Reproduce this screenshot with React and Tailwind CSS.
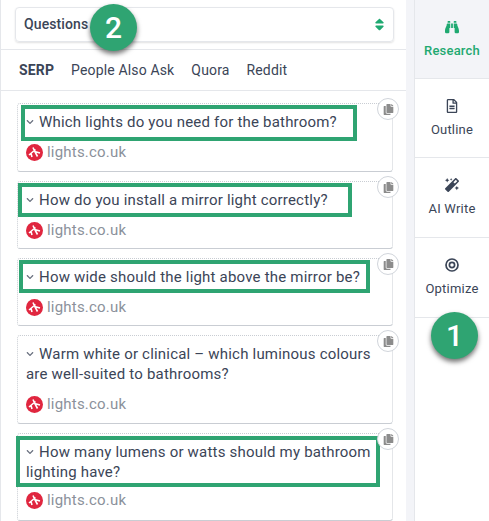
import { FaBinoculars, FaRegFileAlt, FaMagic, FaSort, FaCopy, FaChevronDown } from 'react-icons/fa';

const questions = [
  { text: 'Which lights do you need for the bathroom?', h: 'h-[69px]', mt: 'mt-[10px]', box: 'left-[3px] top-[1px] w-[336px] h-[36px]' },
  { text: 'How do you install a mirror light correctly?', h: 'h-[68px]', mt: 'mt-[10px]', box: 'left-[0px] top-[1px] w-[334px] h-[34px]' },
  { text: 'How wide should the light above the mirror be?', h: 'h-[68px]', mt: 'mt-[10px]', box: 'left-[1px] top-[1px] w-[351px] h-[33px]' },
  { text: 'Warm white or clinical – which luminous colours are well-suited to bathrooms?', h: 'h-[89px]', mt: 'mt-[10px]' },
  { text: 'How many lumens or watts should my bathroom lighting have?', h: 'h-[88px]', mt: 'mt-[8px]', box: 'left-[-2px] top-[2px] w-[364px] h-[51px]' },
];

const navItems = [
  { label: 'Research', icon: FaBinoculars, active: true, h: 'h-[79px]' },
  { label: 'Outline', icon: FaRegFileAlt, h: 'h-[79px]' },
  { label: 'AI Write', icon: FaMagic, h: 'h-[80px]' },
  { label: 'Optimize', icon: TargetIcon, h: 'h-[80px]' },
];

function TargetIcon() {
  return (
    <svg width="14" height="14" viewBox="0 0 14 14" fill="none" stroke="currentColor">
      <circle cx="7" cy="7" r="6" strokeWidth="1.7" />
      <circle cx="7" cy="7" r="2.6" strokeWidth="1.7" />
    </svg>
  );
}

function SiteLogo() {
  return (
    <svg width="17" height="17" viewBox="0 0 17 17" className="shrink-0">
      <circle cx="8.5" cy="8.5" r="8.5" fill="#e0263f" />
      <path d="M3 11 L9.5 5.5 M7 3.5 L9 8 L11.5 12.5 M8.5 7.5 L14 9 M5 9.5 L6 13" fill="none" stroke="#fff" strokeWidth="1.6" />
    </svg>
  );
}

function Marker({ n, className }) {
  return (
    <div className={`absolute w-[47px] h-[47px] rounded-full bg-[#2fa472] text-white flex items-center justify-center text-[30px] font-medium shadow-[0_3px_5px_rgba(0,0,0,0.55)] ${className}`}>
      {n}
    </div>
  );
}

export default function App() {
  return (
    <div className="relative w-[489px] h-[521px] overflow-hidden bg-white flex text-[#3b4557] font-['Roboto',sans-serif]">
      <div className="w-[406px] border-l border-[#e5e7eb] shrink-0">
        {/* select */}
        <div className="h-[50px] border-b border-[#e5e7eb] pl-[14px] pr-[12px] pt-[7px]">
          <div className="h-[35px] rounded border border-[#e5e7eb] shadow-[0_1px_2px_rgba(0,0,0,0.12)] flex items-center justify-between pl-[8px] pr-[6px]">
            <span className="text-[14px] font-medium leading-none -mt-[2px] tracking-[0.1px]">Questions</span>
            <FaSort size={15} className="text-[#1fa971]" />
          </div>
        </div>

        {/* tabs */}
        <div className="h-[41px] border-b border-[#e5e7eb] flex items-center gap-[17px] pl-[18px] text-[14px] tracking-[0.15px]">
          <span className="font-bold">SERP</span>
          <span>People Also Ask</span>
          <span>Quora</span>
          <span>Reddit</span>
        </div>

        {/* questions */}
        <div className="pl-[16px] pr-[13px] pt-[12px] flex flex-col gap-[9px]">
          {questions.map((q) => (
            <div key={q.text} className={`relative ${q.h} border border-dotted border-[#c9cdd3] [border-bottom-style:solid] rounded-[3px] pl-[8px] pr-[8px] pt-[8px]`}>
              {q.box && <div className={`absolute border-[4px] border-[#2fa472] ${q.box}`} />}
              <div className="text-[15px] leading-[20px] tracking-[0.2px]">
                <FaChevronDown size={8} className="inline text-[#6b7280] mr-[5px] align-[1px]" />
                {q.text}
              </div>
              <div className={`flex items-center gap-[4px] ${q.mt}`}>
                <SiteLogo />
                <span className="text-[15px] leading-[20px] text-[#8b919b] tracking-[0.2px]">lights.co.uk</span>
              </div>
              <div className="absolute -right-[7px] -top-[6px] w-[22px] h-[22px] rounded-full bg-white border border-[#d1d5db] flex items-center justify-center">
                <FaCopy size={11} className="text-[#8c8c8c]" />
              </div>
            </div>
          ))}
        </div>
      </div>

      {/* gutter */}
      <div className="w-[8px] bg-[#f3f4f8] shrink-0" />

      {/* sidebar */}
      <div className="flex-1 border-l border-[#e5e7eb]">
        {navItems.map(({ label, icon: Icon, active, h }) => (
          <div
            key={label}
            className={`${h} border-b border-[#e5e7eb] flex flex-col items-center pt-[20px] gap-[9px] text-[13px] tracking-[0.2px] ${active ? 'bg-[#f3f4f8] text-[#1fa971] font-medium' : ''}`}
          >
            <Icon size={14} />
            <span className="leading-[16px]">{label}</span>
          </div>
        ))}
      </div>

      <Marker n="2" className="left-[90px] top-[4px]" />
      <Marker n="1" className="left-[431px] top-[312px]" />
    </div>
  );
}
